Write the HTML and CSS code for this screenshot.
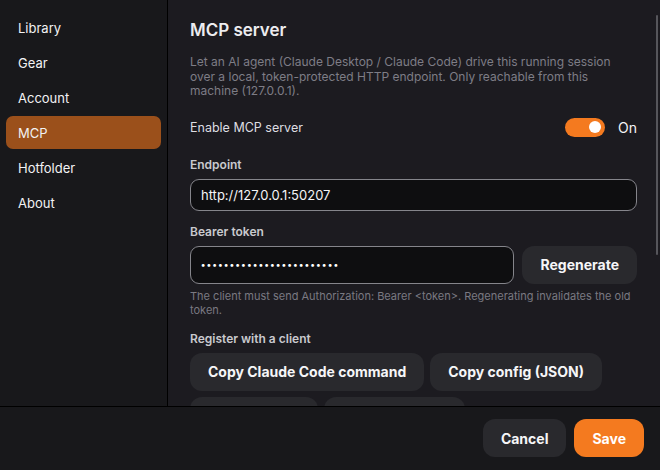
FILE: index.html
```html
<!DOCTYPE html>
<html>
<head>
  <meta charset="utf-8">
  <title>Settings</title>
  <link rel="stylesheet" href="styles.css">
</head>
<body>
  <div class="window">
    <div class="main">
      <div class="sidebar">
        <div class="nav-item">Library</div>
        <div class="nav-item">Gear</div>
        <div class="nav-item">Account</div>
        <div class="nav-item active">MCP</div>
        <div class="nav-item">Hotfolder</div>
        <div class="nav-item">About</div>
      </div>

      <div class="content">
        <h1 class="page-title">MCP server</h1>
        <p class="desc">Let an AI agent (Claude Desktop / Claude Code) drive this running session over a local, token-protected HTTP endpoint. Only reachable from this machine (127.0.0.1).</p>

        <div class="toggle-row">
          <span class="toggle-label">Enable MCP server</span>
          <div class="toggle-switch active">
            <div class="toggle-knob"></div>
          </div>
          <span class="toggle-state">On</span>
        </div>

        <div class="field">
          <label class="field-label" for="endpoint">Endpoint</label>
          <input id="endpoint" class="text-input" type="text" value="http://127.0.0.1:50207" readonly>
        </div>

        <div class="field">
          <label class="field-label" for="token">Bearer token</label>
          <div class="token-row">
            <input id="token" class="text-input token-input" type="password" value="abcdefghijklmnopqrstuvwx" readonly>
            <button class="btn">Regenerate</button>
          </div>
          <div class="hint">The client must send Authorization: Bearer &lt;token&gt;. Regenerating invalidates the old token.</div>
        </div>

        <div class="field register">
          <div class="field-label">Register with a client</div>
          <div class="button-wrap">
            <button class="btn">Copy Claude Code command</button>
            <button class="btn">Copy config (JSON)</button>
            <button class="btn">Copy the URL</button>
            <button class="btn">Open log folder</button>
          </div>
        </div>

        <div class="field">
          <div class="field-label">Status</div>
          <div class="hint">Listening on 127.0.0.1:50207. No clients connected.</div>
        </div>
      </div>

      <!-- headless render hides native scrollbars, so draw the thumb -->
      <div class="scroll-thumb"></div>
    </div>

    <div class="footer">
      <button class="btn">Cancel</button>
      <button class="btn primary">Save</button>
    </div>
  </div>
</body>
</html>
```

FILE: styles.css
```css
body {
  margin: 0;
  padding: 0;
  width: 660px;
  height: 470px;
  overflow: hidden;
  background: #18181b;
  color: #ececef;
  font-family: Inter, "Noto Sans", sans-serif;
}

.window {
  height: 100%;
  display: flex;
  flex-direction: column;
}

.main {
  height: 406px;
  display: flex;
  border-bottom: 1px solid #000;
  flex-shrink: 0;
  position: relative;
}

.sidebar {
  width: 155px;
  padding: 11px 6px 0 6px;
  background: #18181b;
  border-right: 1px solid #000;
  display: flex;
  flex-direction: column;
  gap: 2px;
  flex-shrink: 0;
}

.nav-item {
  height: 33px;
  padding: 0 12px;
  border-radius: 7px;
  display: flex;
  align-items: center;
  font-size: 13px;
  color: #f2f2f4;
}

.nav-item.active {
  background: #9b501b;
}

.content {
  flex: 1;
  background: #1c1b20;
  padding: 19px 23px 30px 22px;
  overflow-y: auto;
  scrollbar-width: none;
}

.scroll-thumb {
  position: absolute;
  top: 15px;
  right: 2px;
  width: 2px;
  height: 240px;
  border-radius: 1px;
  background: #56565b;
}

.page-title {
  margin: 0 0 14px 0;
  font-size: 17px;
  line-height: 22px;
  font-weight: 600;
  color: #ececef;
}

.desc {
  margin: 0;
  font-size: 12px;
  line-height: 14.5px;
  color: #7e7d86;
}

.toggle-row {
  margin-top: 19px;
  display: flex;
  align-items: center;
  height: 19px;
}

.toggle-label {
  flex: 1;
  font-size: 12.5px;
  color: #dedee2;
}

.toggle-switch {
  width: 40px;
  height: 19px;
  border-radius: 10px;
  background: #404040;
  position: relative;
}

.toggle-switch.active {
  background: #f47a1f;
}

.toggle-knob {
  position: absolute;
  top: 3.5px;
  left: 4px;
  width: 12px;
  height: 12px;
  border-radius: 50%;
  background: #fff;
}

.toggle-switch.active .toggle-knob {
  left: 24px;
}

.toggle-state {
  width: 32px;
  text-align: right;
  font-size: 14px;
  color: #f4f4f6;
}

.field {
  margin-top: 20px;
}

.field + .field {
  margin-top: 13px;
}

.field.register {
  margin-top: 14px;
}

.field-label {
  display: block;
  font-size: 12px;
  line-height: 15px;
  font-weight: 600;
  color: #c9c9ce;
  margin-bottom: 7px;
}

.text-input {
  width: 100%;
  height: 32px;
  box-sizing: border-box;
  padding: 0 10px;
  border: 1px solid #85858b;
  border-radius: 9px;
  background: #0e0e10;
  color: #f4f4f6;
  font-family: Inter, "Noto Sans", sans-serif;
  font-size: 13px;
  outline: none;
}

.token-row {
  display: flex;
  gap: 8px;
}

.token-input {
  flex: 1;
  height: 38px;
  font-size: 9px;
  font-weight: 700;
  letter-spacing: 1.5px;
  color: #ffffff;
}

.btn {
  height: 38px;
  padding: 0 18px;
  border: none;
  border-radius: 12px;
  background: #29292d;
  color: #f6f6f8;
  font-family: Inter, "Noto Sans", sans-serif;
  font-size: 14px;
  font-weight: 700;
  cursor: pointer;
  flex-shrink: 0;
}

.btn.primary {
  background: #f47a1f;
  color: #fff;
}

.hint {
  margin-top: 5px;
  font-size: 11px;
  line-height: 14px;
  color: #7a7982;
}

.button-wrap {
  display: flex;
  flex-wrap: wrap;
  gap: 6px;
}

.footer {
  flex: 1;
  display: flex;
  justify-content: flex-end;
  align-items: flex-start;
  gap: 8px;
  padding: 12px 16px 0 0;
  background: #18181b;
}
```
